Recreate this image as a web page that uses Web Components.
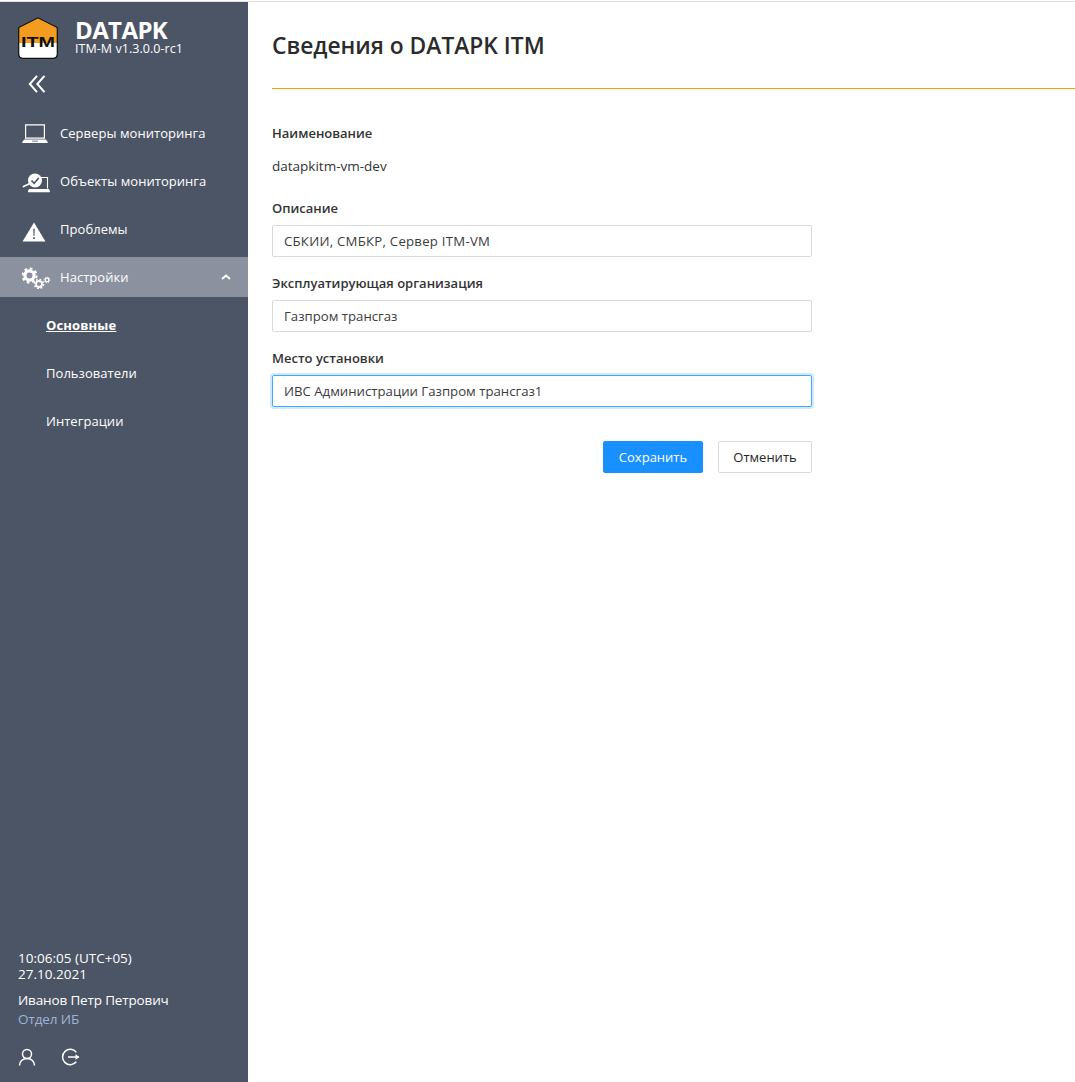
<!DOCTYPE html>
<html lang="ru">
<head>
<meta charset="utf-8">
<title>DATAPK ITM</title>
<style>
  html, body { margin: 0; height: 100%; background: #fff; }
  body { font-family: "Open Sans", "Noto Sans", sans-serif; }
</style>
</head>
<body>
<app-shell>
  <side-bar slot="side">
    <nav-item icon="laptop">Серверы мониторинга</nav-item>
    <nav-item icon="objects">Объекты мониторинга</nav-item>
    <nav-item icon="warning">Проблемы</nav-item>
    <nav-item icon="gears" active>Настройки</nav-item>
    <nav-item sub current>Основные</nav-item>
    <nav-item sub>Пользователи</nav-item>
    <nav-item sub>Интеграции</nav-item>
  </side-bar>
  <info-page>
    <form-field label="Наименование" value="datapkitm-vm-dev" plain></form-field>
    <form-field label="Описание" value="СБКИИ, СМБКР, Сервер ITM-VM" style="--ls:.25px"></form-field>
    <form-field label="Эксплуатирующая организация" value="Газпром трансгаз"></form-field>
    <form-field label="Место установки" value="ИВС Администрации Газпром трансгаз1" focused></form-field>
  </info-page>
</app-shell>

<script>
const ICONS = {
  laptop: `<svg width="26" height="19" viewBox="0 0 26 19"><path fill="none" stroke="#fff" stroke-width="1.200" d="M3.600 .8h18.800v13.400H3.600z"/><path fill="#fff" d="M2.200 15.400h21.600l2 2.600q.2 .9-.6 .9H.8q-.8 0-.6-.9zM10 16.800v.7h6v-.7z"/></svg>`,
  objects: `<svg width="28" height="24" viewBox="0 0 28 24" style="margin-top:3px"><path fill="none" stroke="#fff" stroke-width="1.100" d="M17 6.500h8.500v11"/><path fill="#fff" d="M7 18h20l1 2.500q0 .8-.8 .8H6.600q-.8 0-.8-.8z"/><circle cx="13" cy="9.500" r="7" fill="#fff"/><path fill="none" stroke="#4c5566" stroke-width="1.600" d="M9.500 9.500l2.600 2.800 4.700-5.300"/><path fill="none" stroke="#fff" stroke-width="1.800" stroke-linecap="round" d="M8 12.500 1.500 15.500"/></svg>`,
  warning: `<svg width="24" height="20" viewBox="0 0 26 22" style="margin-top:5px"><path fill="#fff" d="M13 0.500 25.600 21.500H.4z"/><path fill="#4c5566" d="M12.200 7.500h1.600l-.3 8h-1zM12.100 16.800h1.800v1.900h-1.800z"/></svg>`,
  gears: `<svg width="29" height="24" viewBox="0 0 29 24">
    <g fill="none" stroke="#fff">
      <circle cx="7.500" cy="10.500" r="4.600" stroke-width="3.200"/>
      <circle cx="7.500" cy="10.500" r="7" stroke-width="2.200" stroke-dasharray="2.700 2.800"/>
      <circle cx="17" cy="19" r="3" stroke-width="1.800"/>
      <circle cx="17" cy="19" r="4.600" stroke-width="1.500" stroke-dasharray="1.800 1.800"/>
      <circle cx="25" cy="15" r="1.800" stroke-width="1.300"/>
      <circle cx="25" cy="15" r="2.900" stroke-width="1" stroke-dasharray="1.200 1.080"/>
    </g></svg>`
};

class AppShell extends HTMLElement {
  constructor() {
    super();
    this.attachShadow({ mode: "open" }).innerHTML = `
      <style>
        :host { display: grid; grid-template-columns: 248px 1fr; height: 1080px; margin-top: 2px; box-shadow: 0 -1px 0 #e2e2e2; }
        main { min-width: 0; }
      </style>
      <slot name="side"></slot>
      <main><slot></slot></main>`;
  }
}

class SideBar extends HTMLElement {
  constructor() {
    super();
    this.attachShadow({ mode: "open" }).innerHTML = `
      <style>
        :host { display: flex; flex-direction: column; background: #4c5566; color: #fff; height: 100%; font-size: 13px; line-height: 20px; }
        .brand { display: flex; gap: 17px; padding: 14px 0 0 18px; height: 46px; }
        .brand svg { display: block; margin-top: 1px; }
        .name { font-size: 24px; line-height: 24px; font-weight: 700; margin-top: 2px; letter-spacing: -.6px; }
        .ver { font-size: 12.500px; line-height: 14px; letter-spacing: .05px; }
        .collapse { padding: 13px 0 0 28px; height: 25px; }
        .collapse svg { display: block; }
        nav { display: flex; flex-direction: column; gap: 8px; margin-top: 13px; }
        .foot { margin-top: auto; padding: 0 0 16px 18px; font-size: 13.500px; }
        .clock { line-height: 16px; }
        .user { margin-top: 6px; line-height: 24px; letter-spacing: -.15px; }
        .dept { color: #9db4d3; line-height: 14px; letter-spacing: -.1px; }
        .tools { display: flex; gap: 25px; margin-top: 22px; }
        .tools svg { display: block; }
      </style>
      <div class="brand">
        <svg width="40" height="42" viewBox="0 0 40 42">
          <path fill="#fff" d="M1 24h38v13q0 4-4 4H5q-4 0-4-4z"/>
          <path fill="#f39c1f" d="M1 26V10.500L20 1l19 9.500V26z"/>
          <path fill="none" stroke="#111" stroke-width="1.200" d="M.7 10.500 20 .8l19.300 9.700V37q0 4.300-4.300 4.300H5Q.7 41.300.7 37z"/>
          <text x="20" y="30" text-anchor="middle" textLength="34" lengthAdjust="spacingAndGlyphs" font-family="Liberation Sans, sans-serif" font-size="15.500" font-weight="700" fill="#111">ITM</text>
        </svg>
        <div>
          <div class="name">DATAPK</div>
          <div class="ver">ITM-M v1.3.0.0-rc1</div>
        </div>
      </div>
      <div class="collapse">
        <svg width="18" height="18" viewBox="0 0 18 18"><path fill="none" stroke="#fff" stroke-width="2" d="M9 .8 1.800 9 9 17.200M16.500 .8 9.300 9 16.500 17.200"/></svg>
      </div>
      <nav><slot></slot></nav>
      <div class="foot">
        <div class="clock">10:06:05 (UTC+05)<br>27.10.2021</div>
        <div class="user">Иванов Петр Петрович</div>
        <div class="dept">Отдел ИБ</div>
        <div class="tools">
          <svg width="18" height="18" viewBox="0 0 18 18"><g fill="none" stroke="#fff" stroke-width="1.500"><circle cx="9" cy="6" r="4.500"/><path d="M1.500 17.500c0-4 3-7 7.500-7s7.500 3 7.500 7"/></g></svg>
          <svg width="19" height="18" viewBox="0 0 19 18"><g fill="none" stroke="#fff" stroke-width="1.500"><path d="M15.300 4.200A7.700 7.700 0 1 0 15.300 13.800"/><path d="M7 9h10.500"/></g><path fill="#fff" d="M14.500 6.200 18.500 9l-4 2.800z"/></svg>
        </div>
      </div>`;
  }
}

class NavItem extends HTMLElement {
  constructor() {
    super();
    const icon = ICONS[this.getAttribute("icon")];
    const arrow = this.hasAttribute("active")
      ? `<svg class="arrow" width="10" height="6" viewBox="0 0 10 6"><path fill="none" stroke="#fff" stroke-width="2" d="M1 5l4-3.500L9 5"/></svg>` : "";
    this.attachShadow({ mode: "open" }).innerHTML = `
      <style>
        :host { display: flex; align-items: center; height: 40px; padding-left: 22px; box-sizing: border-box; color: #fff; font-size: 13px; letter-spacing: .05px; }
        :host([active]) { background: #8b919e; }
        :host([sub]) { padding-left: 46px; }
        :host([current]) { font-weight: 700; text-decoration: underline; letter-spacing: .15px; }
        .ic { width: 38px; display: flex; flex: none; align-items: center; }
        .ic svg { display: block; }
        .arrow { margin-left: auto; margin-right: 17px; }
      </style>
      ${icon ? `<span class="ic">${icon}</span>` : ""}
      <slot></slot>
      ${arrow}`;
  }
}

class InfoPage extends HTMLElement {
  constructor() {
    super();
    this.attachShadow({ mode: "open" }).innerHTML = `
      <style>
        :host { display: block; padding: 0 0 0 24px; color: #2b2b2b; }
        h1 { margin: 0; height: 87px; box-sizing: border-box; padding-top: 27px; font-size: 22.800px; line-height: 34px; font-weight: 600; border-bottom: 1px solid #f59f00; }
        form { width: 540px; padding-top: 35px; display: flex; flex-direction: column; }
        .actions { display: flex; justify-content: flex-end; gap: 15px; margin-top: 17px; }
        button { height: 32px; box-sizing: border-box; border-radius: 2px; font: inherit; font-size: 13px; padding: 0; }
        .save { width: 100px; background: #1890ff; border: 1px solid #1890ff; color: #fff; }
        .cancel { width: 94px; background: #fff; border: 1px solid #d9d9d9; color: #262626; }
      </style>
      <h1>Сведения о DATAPK ITM</h1>
      <form>
        <slot></slot>
        <div class="actions">
          <button type="button" class="save">Сохранить</button>
          <button type="button" class="cancel">Отменить</button>
        </div>
      </form>`;
  }
}

class FormField extends HTMLElement {
  constructor() {
    super();
    const label = this.getAttribute("label");
    const value = this.getAttribute("value");
    const plain = this.hasAttribute("plain");
    this.attachShadow({ mode: "open" }).innerHTML = `
      <style>
        :host { display: block; font-size: 13.200px; line-height: 18px; margin-bottom: 17px; }
        :host([plain]) { margin-bottom: 24px; }
        label { display: block; font-size: 13px; font-weight: 600; height: 18px; margin-bottom: 8px; color: #333; }
        :host([plain]) label { margin-bottom: 15px; }
        .plain { color: #333; font-size: 13.500px; }
        .box { height: 32px; box-sizing: border-box; border: 1px solid #d9d9d9; border-radius: 2px; padding: 0 11px; display: flex; align-items: center; color: #3c3c3c; letter-spacing: var(--ls, 0); }
        :host([focused]) .box { border-color: #40a9ff; box-shadow: 0 0 0 2px rgba(24,144,255,.2); }
      </style>
      <label>${label}</label>
      ${plain ? `<div class="plain">${value}</div>` : `<div class="box">${value}</div>`}`;
  }
}

customElements.define("app-shell", AppShell);
customElements.define("side-bar", SideBar);
customElements.define("nav-item", NavItem);
customElements.define("info-page", InfoPage);
customElements.define("form-field", FormField);
</script>
</body>
</html>
